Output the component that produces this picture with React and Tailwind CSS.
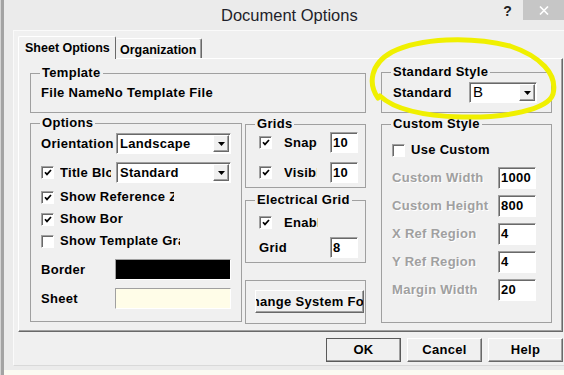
import React from 'react';

// ── 3D edges (Win classic) ───────────────────────
const sunken = 'bg-white border border-t-[#a0a0a0] border-l-[#a0a0a0] border-r-white border-b-white shadow-[inset_1px_1px_0_#696969]';
const raised = 'bg-[#f0f0f0] border border-t-white border-l-white border-r-[#696969] border-b-[#696969] shadow-[inset_-1px_-1px_0_#a0a0a0]';
const disabled = 'text-[#a0a0a0] [text-shadow:1px_1px_0_#fff]';

function Group({ title, className, children }) {
  return (
    <fieldset className={`min-w-0 border border-[#a0a0a0] ${className}`}>
      <legend className="ml-[9px] px-[2px] leading-[16px] whitespace-nowrap">{title}</legend>
      {children}
    </fieldset>
  );
}

function Check({ checked }) {
  return (
    <span className={`w-[13px] h-[13px] shrink-0 flex items-center justify-center ${sunken}`}>
      {checked && (
        <svg width="8" height="7" viewBox="0 0 8 7">
          <path d="M1 3.2 L3 5.4 L7 1" stroke="#000" strokeWidth="1.7" fill="none" />
        </svg>
      )}
    </span>
  );
}

function Arrow() {
  return (
    <span className={`ml-auto mr-[1px] w-[16px] h-[17px] shrink-0 flex items-center justify-center ${raised}`}>
      <svg width="7" height="4" viewBox="0 0 7 4"><path d="M0 0h7L3.5 4z" fill="#000" /></svg>
    </span>
  );
}

function Combo({ className, children }) {
  return (
    <div className={`h-[21px] flex items-center ${sunken} ${className}`}>
      <span className="pl-[3px] whitespace-nowrap">{children}</span>
      <Arrow />
    </div>
  );
}

function Field({ className, children }) {
  return (
    <div className={`h-[21px] flex items-center pl-[2px] ${sunken} ${className}`}>{children}</div>
  );
}

function Button({ className, children }) {
  return (
    <div className={`h-[24px] w-[75px] flex items-center justify-center ${raised} ${className}`}>{children}</div>
  );
}

function CustomRow({ label, value, first }) {
  return (
    <div className={`h-[22px] flex items-center ${first ? 'mt-[9px]' : 'mt-[6px]'}`}>
      <span className={`w-[106px] whitespace-nowrap ${disabled}`}>{label}</span>
      <div className={`h-[22px] w-[38px] flex items-center pl-[2px] ${sunken}`}>{value}</div>
    </div>
  );
}

export default function App() {
  return (
    <div className="relative w-[564px] h-[375px] overflow-hidden flex bg-[#ebebeb] font-['Liberation_Sans',Arial,sans-serif] text-[13px] tracking-[0.3px] font-bold text-black">
      {/* window edge */}
      <div className="w-[1px] bg-[#d4d4d4]" />
      <div className="w-[3px] bg-[#a3a3a3]" />

      <div className="flex-1 flex flex-col">
        {/* ── title bar ── */}
        <div className="h-[30px] flex items-start">
          <span className="ml-[217px] mt-[6px] text-[16.5px] leading-[18px] tracking-normal font-normal text-[#1f1f2a] whitespace-nowrap">Document Options</span>
          <span className="flex-1" />
          <span className="mt-[2px] mr-[11px] text-[14px] leading-[18px] text-[#222]">?</span>
          <div className="w-[41px] h-[20px] bg-[#c6c6c6] flex items-center justify-center">
            <svg width="10" height="9" viewBox="0 0 10 9">
              <path d="M1 0.5 L9 8.5 M9 0.5 L1 8.5" stroke="#fff" strokeWidth="1.6" />
            </svg>
          </div>
        </div>

        {/* ── client area ── */}
        <div className="ml-[9px] border-l border-t border-b border-l-[#fafafa] border-t-[#fafafa] border-b-[#d9d9d9] bg-[#f0f0f0] pl-[4px] pt-[5px] pb-[3px] flex flex-col">
          {/* tabs */}
          <div className="h-[22px] flex items-end text-[12.5px] tracking-normal whitespace-nowrap">
            <div className="relative z-10 -mb-[1px] h-[23px] w-[98px] pl-[6px] pt-[3px] leading-[16px] bg-[#f0f0f0] border-t border-l border-r border-t-white border-l-white border-r-[#696969] rounded-t-[2px]">
              Sheet Options
            </div>
            <div className="h-[20px] w-[86px] pl-[4px] pt-[3px] leading-[16px] border-t border-r border-t-white border-r-[#696969] shadow-[inset_-1px_0_0_#a0a0a0] rounded-t-[2px]">
              Organization
            </div>
          </div>

          {/* tab page */}
          <div className="h-[274px] w-[545px] flex border border-t-white border-l-white border-r-[#696969] border-b-[#696969] shadow-[inset_-1px_-1px_0_#a0a0a0] pl-[11px]">
            {/* left part */}
            <div className="w-[336px] pt-[6px] flex flex-col">
              <Group title="Template" className="h-[48px]">
                <div className="pl-[10px] pt-[4px] leading-[16px] whitespace-nowrap">File NameNo Template File</div>
              </Group>

              <div className="mt-[2px] flex items-start">
                <Group title="Options" className="w-[212px] h-[207px]">
                  <div className="pl-[10px] pt-[2px] leading-[16px]">
                    <div className="h-[21px] flex items-center">
                      <span className="w-[75px] whitespace-nowrap">Orientation</span>
                      <Combo className="w-[115px]">Landscape</Combo>
                    </div>
                    <div className="mt-[8px] h-[21px] flex items-center">
                      <Check checked />
                      <span className="ml-[6px] w-[51px] overflow-hidden whitespace-nowrap">Title Block</span>
                      <Combo className="ml-[5px] w-[115px]">Standard</Combo>
                    </div>
                    <div className="mt-[6px] h-[16px] flex items-center">
                      <Check checked />
                      <span className="ml-[6px] w-[114px] overflow-hidden whitespace-nowrap">Show Reference Zones</span>
                    </div>
                    <div className="mt-[6px] h-[16px] flex items-center">
                      <Check checked />
                      <span className="ml-[6px] w-[63px] overflow-hidden whitespace-nowrap">Show Border</span>
                    </div>
                    <div className="mt-[6px] h-[16px] flex items-center">
                      <Check />
                      <span className="ml-[6px] w-[120px] overflow-hidden whitespace-nowrap">Show Template Graphics</span>
                    </div>
                    <div className="mt-[10px] h-[21px] flex items-center">
                      <span className="w-[74px]">Border</span>
                      <div className="w-[116px] h-[21px] bg-black border border-t-[#a0a0a0] border-l-[#a0a0a0] border-r-white border-b-white" />
                    </div>
                    <div className="mt-[8px] h-[21px] flex items-center">
                      <span className="w-[74px]">Sheet</span>
                      <div className="w-[116px] h-[21px] bg-[#fffde8] border border-t-[#a0a0a0] border-l-[#a0a0a0] border-r-white border-b-white" />
                    </div>
                  </div>
                </Group>

                <div className="ml-[3px] w-[121px] pt-[1px] flex flex-col">
                  <Group title="Grids" className="h-[72px]">
                    <div className="pl-[13px] leading-[16px]">
                      <div className="h-[21px] flex items-center">
                        <Check checked />
                        <span className="ml-[12px] w-[33px] overflow-hidden whitespace-nowrap">SnapOn</span>
                        <Field className="ml-[13px] w-[28px]">10</Field>
                      </div>
                      <div className="mt-[9px] h-[21px] flex items-center">
                        <Check checked />
                        <span className="ml-[12px] w-[33px] overflow-hidden whitespace-nowrap">Visible</span>
                        <Field className="ml-[13px] w-[28px]">10</Field>
                      </div>
                    </div>
                  </Group>

                  <Group title="Electrical Grid" className="mt-[4px] h-[71px]">
                    <div className="pl-[13px] leading-[16px]">
                      <div className="mt-[4px] h-[21px] flex items-center">
                        <Check checked />
                        <span className="ml-[12px] w-[34px] overflow-hidden whitespace-nowrap">Enable</span>
                      </div>
                      <div className="mt-[4px] h-[21px] flex items-center">
                        <span className="w-[71px]">Grid</span>
                        <Field className="w-[28px]">8</Field>
                      </div>
                    </div>
                  </Group>

                  <div className="mt-[17px] h-[44px] border border-[#a0a0a0] pl-[9px] pt-[9px]">
                    <div className={`w-[109px] h-[23px] overflow-hidden flex items-center justify-center whitespace-nowrap ${raised}`}>
                      Change System Font
                    </div>
                  </div>
                </div>
              </div>
            </div>

            {/* right part */}
            <div className="ml-[15px] w-[171px] pt-[5px] flex flex-col">
              <Group title="Standard Style" className="h-[49px]">
                <div className="pl-[11px] pt-[2px] leading-[16px]">
                  <div className="h-[21px] flex items-center">
                    <span className="w-[76px]">Standard</span>
                    <Combo className="w-[68px]"><span className="text-[15px] font-normal">B</span></Combo>
                  </div>
                </div>
              </Group>

              <Group title="Custom Style" className="mt-[3px] h-[207px]">
                <div className="pl-[10px] pt-[10px] leading-[16px]">
                  <div className="h-[16px] flex items-center">
                    <Check />
                    <span className="ml-[6px] whitespace-nowrap">Use Custom</span>
                  </div>
                  <CustomRow first label="Custom Width" value="1000" />
                  <CustomRow label="Custom Height" value="800" />
                  <CustomRow label="X Ref Region" value="4" />
                  <CustomRow label="Y Ref Region" value="4" />
                  <CustomRow label="Margin Width" value="20" />
                </div>
              </Group>
            </div>
          </div>

          {/* dialog buttons */}
          <div className="mt-[6px] flex justify-end gap-[6px] pr-[1px]">
            <Button className="w-[74px] outline outline-1 outline-[#5a5a5a] -outline-offset-1">OK</Button>
            <Button className="w-[75px]">Cancel</Button>
            <Button className="w-[75px]">Help</Button>
          </div>
        </div>

        <div className="h-[4px]" />
        <div className="flex-1 bg-[#fbfbf2]" />
      </div>

      {/* yellow annotation loop */}
      <svg className="absolute inset-0 pointer-events-none" width="564" height="375" viewBox="0 0 564 375">
        <path
          d="M378 98 C368 84 370 64 392 52 C420 38 470 36 510 46 C540 56 558 74 553 94 C548 110 505 118 462 117 C425 116 395 110 380 96"
          stroke="#f0f000"
          strokeWidth="5"
          fill="none"
          strokeLinecap="round"
        />
      </svg>
    </div>
  );
}
